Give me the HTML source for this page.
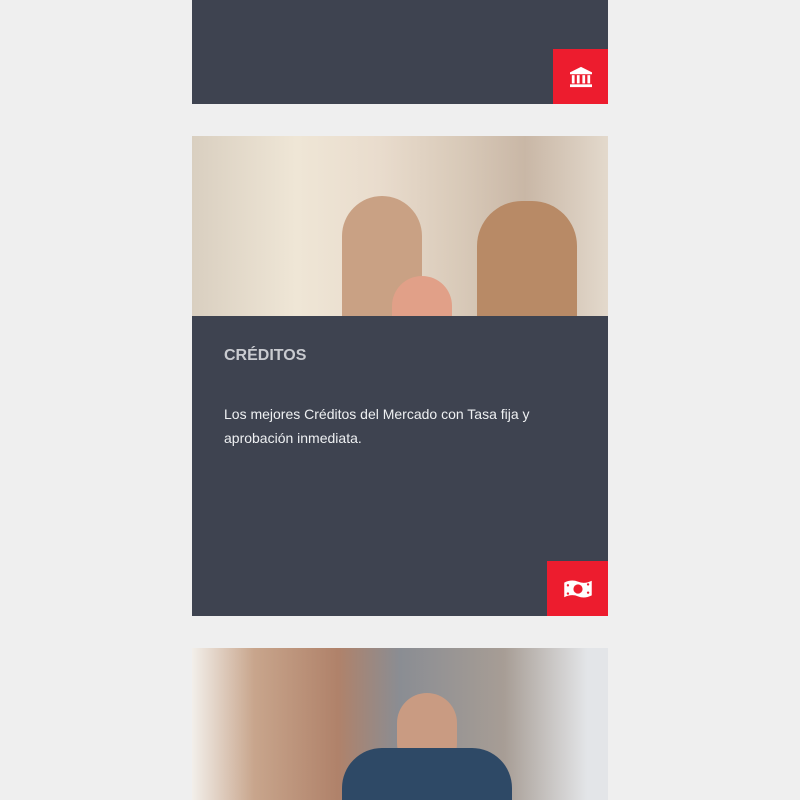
<!DOCTYPE html>
<html><head><meta charset="utf-8"><style>
body{margin:0;background:#efefef;width:800px;height:800px;overflow:hidden;font-family:"Liberation Sans",sans-serif;position:relative}
.card{position:absolute;left:192px;width:416px;background:#3e4350}
.red{position:absolute;background:#ed1c2e;display:flex;align-items:center;justify-content:center}
</style></head><body>
<div class="card" style="top:0;height:104px">
 <div class="red" style="left:361px;top:49px;width:55px;height:55px">
  <svg width="24" height="22" viewBox="0 0 26 24"><path d="M13 1L1 7v2h24V7z" fill="#fff"/><rect x="3" y="10" width="3" height="9" fill="#fff"/><rect x="8.5" y="10" width="3" height="9" fill="#fff"/><rect x="14.5" y="10" width="3" height="9" fill="#fff"/><rect x="20" y="10" width="3" height="9" fill="#fff"/><rect x="1" y="20" width="24" height="3" fill="#fff"/></svg>
 </div>
</div>
<div class="card" style="top:136px;height:480px">
 <div style="height:180px;background:linear-gradient(90deg,#d9cfc0 0%,#efe6d6 25%,#e9dccd 45%,#d8c9b8 65%,#c9b7a6 80%,#e3d9cc 100%);position:relative;overflow:hidden">
  <div style="position:absolute;left:150px;top:60px;width:80px;height:120px;background:#c9a184;border-radius:40px 40px 0 0"></div>
  <div style="position:absolute;left:285px;top:65px;width:100px;height:115px;background:#b88a66;border-radius:45px 45px 0 0"></div>
  <div style="position:absolute;left:200px;top:140px;width:60px;height:40px;background:#e1a088;border-radius:30px 30px 0 0"></div>
 </div>
 <div style="position:absolute;left:32px;top:211px;color:#c9cbd0;font-weight:bold;font-size:16px">CRÉDITOS</div>
 <div style="position:absolute;left:32px;top:266px;width:350px;color:#eef0f2;font-size:14px;line-height:24px">Los mejores Créditos del Mercado con Tasa fija y aprobación inmediata.</div>
 <div class="red" style="left:355px;top:425px;width:61px;height:55px">
  <svg width="32" height="22" viewBox="0 0 34 24"><path d="M2 5Q10 1 17 4T32 3V19Q24 23 17 20T2 21Z" fill="#fff"/><circle cx="17" cy="12" r="5" fill="#ed1c2e"/><circle cx="6" cy="8" r="1.3" fill="#ed1c2e"/><circle cx="28" cy="7" r="1.3" fill="#ed1c2e"/><circle cx="6" cy="17" r="1.3" fill="#ed1c2e"/><circle cx="28" cy="16" r="1.3" fill="#ed1c2e"/></svg>
 </div>
</div>
<div class="card" style="top:648px;height:152px;background:linear-gradient(90deg,#f2efea 0%,#c8a58c 15%,#b0826a 35%,#8a8d93 50%,#a79d95 75%,#e3e5e8 95%);overflow:hidden">
 <div style="position:absolute;left:205px;top:45px;width:60px;height:80px;background:#c99b82;border-radius:30px"></div>
 <div style="position:absolute;left:150px;top:100px;width:170px;height:60px;background:#2e4966;border-radius:40px 40px 0 0"></div>
</div>
</body></html>
